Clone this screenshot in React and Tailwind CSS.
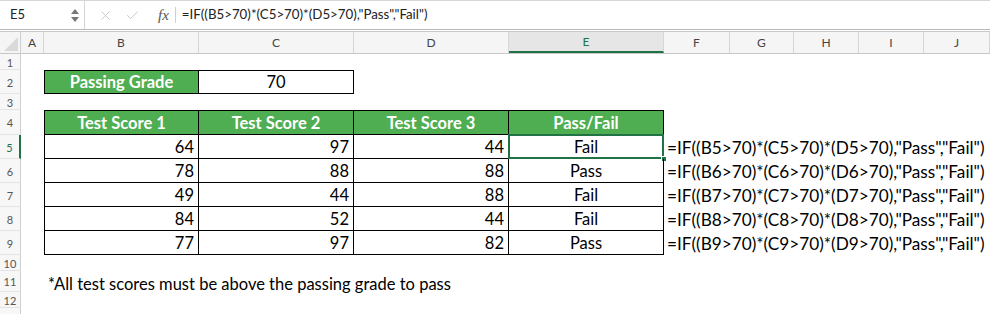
import { X, Check } from 'lucide-react'

const font = { fontFamily: 'Lato, "Open Sans", sans-serif' }

const cols = [
  { key: 'A', w: 'w-[23px]' },
  { key: 'B', w: 'w-[155px]' },
  { key: 'C', w: 'w-[155px]' },
  { key: 'D', w: 'w-[155px]' },
  { key: 'E', w: 'w-[155px]' },
  { key: 'F', w: 'w-[66px]' },
  { key: 'G', w: 'w-[64px]' },
  { key: 'H', w: 'w-[65px]' },
  { key: 'I', w: 'w-[65px]' },
  { key: 'J', w: 'w-[66px]' },
]

const scores = [
  [64, 97, 44, 'Fail'],
  [78, 88, 88, 'Pass'],
  [49, 44, 88, 'Fail'],
  [84, 52, 44, 'Fail'],
  [77, 97, 82, 'Pass'],
]

function RowHead({ n, h, active }) {
  return (
    <div
      className={`w-[21px] shrink-0 ${h} flex items-center justify-center pt-[3px] text-[11px] bg-[#f7f7f7] border-b border-[#e4e4e4] ${
        active ? 'border-r-2 border-r-[#217346] text-[#217346]' : 'border-r border-r-[#cfcfcf] text-[#555]'
      }`}
      style={font}
    >
      {n}
    </div>
  )
}

function Toolbar() {
  return (
    <div className="h-[30px] flex items-stretch border-t border-[#d6d6d6] border-b border-b-[#b8b8b8] bg-white">
      <div className="w-[85px] shrink-0 flex items-center justify-between pl-[10px] pr-[5px] border-r border-[#d6d6d6]">
        <span className="text-[13px] text-[#222]" style={font}>E5</span>
        <div className="flex flex-col gap-[3px] items-center">
          <svg width="8" height="5" viewBox="0 0 8 5"><path d="M4 0 L8 5 L0 5 Z" fill="#777" /></svg>
          <svg width="8" height="5" viewBox="0 0 8 5"><path d="M0 0 L8 0 L4 5 Z" fill="#777" /></svg>
        </div>
      </div>
      <div className="flex items-center pl-[13px]">
        <X size={15} strokeWidth={1.3} className="text-[#bcbcbc]" />
        <Check size={15} strokeWidth={1.3} className="text-[#bcbcbc] ml-[12px]" />
        <span className="ml-[18px] text-[15px] italic text-[#555]" style={{ fontFamily: '"Liberation Serif", serif' }}>fx</span>
        <div className="ml-[6px] w-px h-[16px] bg-[#cfcfcf]" />
        <span className="ml-[6px] text-[13.3px] text-[#222]" style={font}>
          =IF((B5&gt;70)*(C5&gt;70)*(D5&gt;70),"Pass","Fail")
        </span>
      </div>
    </div>
  )
}

function ColumnHeader() {
  return (
    <div className="mt-px h-[23px] flex border-t border-[#c8c8c8] border-b border-b-[#c8c8c8] bg-[#f5f5f5]">
      <div className="w-[21px] shrink-0 border-r border-[#cfcfcf] flex items-end justify-end p-[2px]">
        <svg width="14" height="14" viewBox="0 0 14 14"><path d="M14 0 L14 14 L0 14 Z" fill="#d9d9d9" /></svg>
      </div>
      {cols.map(c => (
        <div
          key={c.key}
          className={`${c.w} shrink-0 flex items-center justify-center text-[12px] border-r border-[#d6d6d6] ${
            c.key === 'E' ? 'bg-[#e6e6e6] border-b-2 border-b-[#217346] text-[#217346]' : 'text-[#444]'
          }`}
          style={font}
        >
          {c.key}
        </div>
      ))}
    </div>
  )
}

function EmptyRow({ n, h, children }) {
  return (
    <div className="flex">
      <RowHead n={n} h={h} />
      <div className={`w-[23px] shrink-0 ${h}`} />
      {children}
    </div>
  )
}

export default function App() {
  const cell = 'w-[155px] shrink-0 border-r border-b border-black flex items-center text-[16.5px] text-black'
  const green = 'bg-[#4fae52] text-white font-bold justify-center'
  return (
    <div className="w-[990px] h-[314px] overflow-hidden bg-white" style={font}>
      <Toolbar />
      <ColumnHeader />

      <EmptyRow n={1} h="h-[16px]" />

      <EmptyRow n={2} h="h-[24px]">
        <div className={`${cell} h-[24px] border-t border-l ${green}`}>Passing Grade</div>
        <div className={`${cell} h-[24px] border-t justify-center`}>70</div>
      </EmptyRow>

      <EmptyRow n={3} h="h-[16px]" />

      <EmptyRow n={4} h="h-[25px]">
        <div className={`${cell} h-[25px] border-t border-l ${green} pt-[2px]`}>Test Score 1</div>
        <div className={`${cell} h-[25px] border-t ${green} pt-[2px]`}>Test Score 2</div>
        <div className={`${cell} h-[25px] border-t ${green} pt-[2px]`}>Test Score 3</div>
        <div className={`${cell} h-[25px] border-t ${green} pt-[2px]`}>Pass/Fail</div>
      </EmptyRow>

      {scores.map((r, i) => {
        const n = i + 5
        return (
          <div key={n} className="flex">
            <RowHead n={n} h="h-[24px]" active={n === 5} />
            <div className="w-[23px] shrink-0 h-[24px]" />
            <div className={`${cell} h-[24px] border-l justify-end pr-[4px] pt-[2px]`}>{r[0]}</div>
            <div className={`${cell} h-[24px] justify-end pr-[4px] pt-[2px]`}>{r[1]}</div>
            <div className={`${cell} h-[24px] justify-end pr-[4px] pt-[2px]`}>{r[2]}</div>
            <div className={`${cell} h-[24px] justify-center pt-[2px] relative`}>
              {r[3]}
              {n === 5 && (
                <>
                  <div className="absolute -left-px -top-px -right-px -bottom-px border-2 border-[#217346]" />
                  <div className="absolute -right-[4px] -bottom-[4px] w-[6px] h-[6px] bg-[#217346] border border-white" />
                </>
              )}
            </div>
            <div className="h-[24px] flex items-center pl-[3px] pt-[2px] whitespace-nowrap text-[17.2px] text-black">
              =IF((B{n}&gt;70)*(C{n}&gt;70)*(D{n}&gt;70),"Pass","Fail")
            </div>
          </div>
        )
      })}

      <EmptyRow n={10} h="h-[16px]" />
      <EmptyRow n={11} h="h-[21px]">
        <div className="h-[21px] flex items-center pl-[4px] pt-[6px] text-[16.5px] text-black whitespace-nowrap">
          *All test scores must be above the passing grade to pass
        </div>
      </EmptyRow>
      <EmptyRow n={12} h="h-[16px]" />
      <EmptyRow n="" h="h-[16px]" />
    </div>
  )
}
